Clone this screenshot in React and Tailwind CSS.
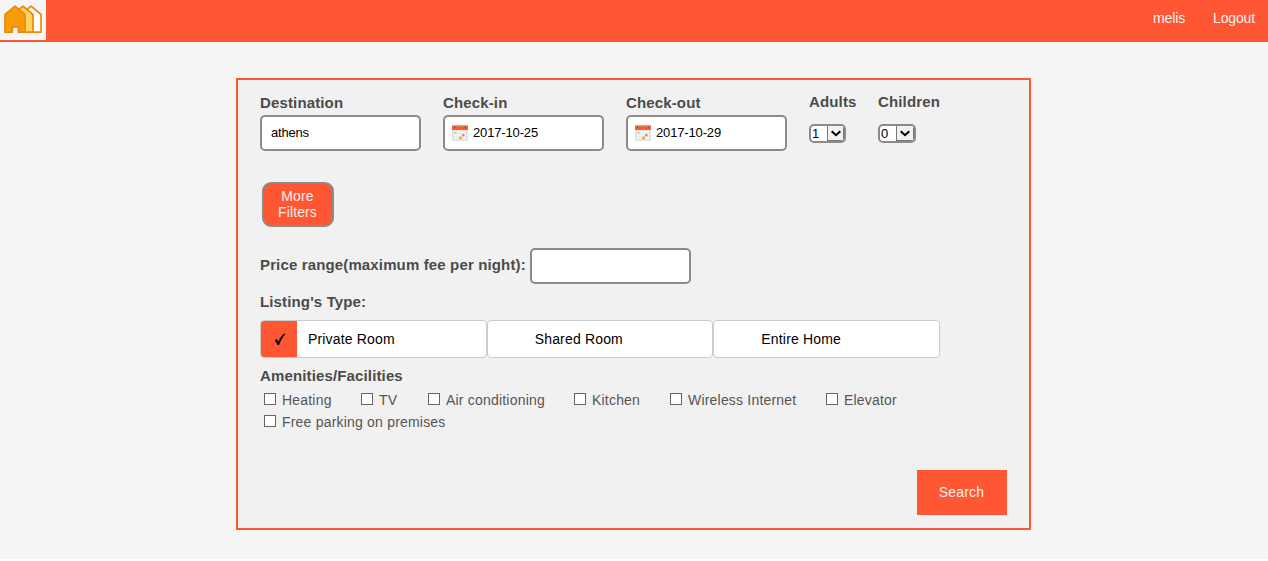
import React from "react";

const labelClass = "whitespace-nowrap text-[15px] font-bold tracking-[0.14px] text-[#4b4b4b]";

function Logo() {
  return (
    <svg width="46" height="40" viewBox="0 0 46 40" className="block bg-[#f5f5f5]">
      <g stroke="#ea890c" strokeWidth="1.7" strokeLinejoin="round">
        <path d="M21 32.2V14.5L31 6.2 41 14.5V32.2Z" fill="#fff" />
        <path d="M13 32.2V14.5L23 6.2 33 14.5V32.2Z" fill="#ffd35c" />
        <path d="M5 32.2V14.5L15 6.2 25 14.5V32.2Z" fill="#f79d08" />
        <path d="M12.3 33V26.8H18.3V33" fill="#f5f5f5" />
      </g>
      <path d="M13.2 31h4.2v3h-4.2Z" fill="#f5f5f5" />
    </svg>
  );
}

function CalendarIcon() {
  return (
    <svg width="16" height="16" viewBox="0 0 16 16" className="block shrink-0">
      <rect x="0" y="1" width="16" height="15" rx="0.8" fill="#dfe3ea" />
      <rect x="2" y="6" width="12" height="8" fill="#f6f7fa" />
      <path d="M5 6v8M8 6v8M11 6v8M2 8.6h12M2 11.3h12" stroke="#dfe3ea" strokeWidth="0.7" />
      <path d="M0 0.5h16V5H0Z" fill="#ff5a2c" />
      <path d="M0 0.5h16V1.5H0Z" fill="#d88a78" />
      <rect x="2" y="1.5" width="1.3" height="1.5" fill="#b5432a" />
      <rect x="12.7" y="1.5" width="1.3" height="1.5" fill="#b5432a" />
      <rect x="2.2" y="6.6" width="2.4" height="2.3" fill="#f8d25c" />
      <rect x="10.2" y="9" width="2.3" height="2.3" fill="#f2785a" />
      <rect x="7.2" y="11.8" width="2.6" height="2.3" fill="#f99b18" />
    </svg>
  );
}

function Field({ label, value, icon }) {
  return (
    <div className="mr-[22px] flex w-[161px] flex-col">
      <label className={labelClass + " h-[21px] leading-[17px]"}>{label}</label>
      <div className="flex h-9 items-center rounded-[5px] border-2 border-[#8b8b8b] bg-white text-[13px] text-black">
        {icon ? (
          <div className="flex items-center gap-[5px] pl-[7px]">
            <CalendarIcon />
            <span className="whitespace-nowrap leading-4 tracking-[-0.15px]">{value}</span>
          </div>
        ) : (
          <span className="pl-[9px] leading-4 tracking-[-0.2px]">{value}</span>
        )}
      </div>
    </div>
  );
}

function CountSelect({ label, value, boxWidth }) {
  return (
    <div className="w-[69px]">
      <div className={labelClass + " h-[30px] leading-[15px]"}>{label}</div>
      <div className={"flex h-[19px] overflow-hidden rounded-[5px] border-2 border-[#8b8b8b] bg-white " + boxWidth}>
        <span className="w-4 pl-[1px] text-[13px] leading-[15px] text-black">{value}</span>
        <span className="flex flex-1 items-center justify-center border-r border-b border-l border-[#777] bg-[#f1f1f1]">
          <svg width="12" height="7" viewBox="0 0 12 7" className="shrink-0">
            <path d="M1.7 1.2L6 5.2 10.3 1.2" fill="none" stroke="#000" strokeWidth="2" />
          </svg>
        </span>
      </div>
    </div>
  );
}

function RoomType({ label, selected }) {
  return (
    <div className="flex h-[38px] flex-1 overflow-hidden rounded-[4px] border border-[#ccc] bg-white">
      <div className={"flex w-9 shrink-0 items-center justify-center text-black " + (selected ? "bg-[#ff5733]" : "")}>
        {selected && (
          <svg width="12" height="13" viewBox="0 0 12 13" className="ml-[1px]">
            <path d="M0.8 7.3L2.8 6.1 4.3 8.8C5.6 5.7 7.6 2.5 10.2 0.6L11.3 1.1C8.8 3.9 6.8 7.7 5.2 11.8L3.5 12C2.7 10.2 1.9 8.6 0.8 7.3Z" />
          </svg>
        )}
      </div>
      <span className="pl-[11px] text-sm leading-9 tracking-[0.17px] text-black">{label}</span>
    </div>
  );
}

function Amenity({ label, width }) {
  return (
    <label className={"flex h-[22px] items-center gap-[6px] whitespace-nowrap text-sm text-[#555] " + width}>
      <span className="-mt-[2px] h-3 w-3 border border-[#666] bg-white" />
      <span className="tracking-[0.2px]">{label}</span>
    </label>
  );
}

export default function App() {
  return (
    <div className="h-[561px] overflow-hidden bg-white font-['Liberation_Sans',Arial,sans-serif]">
      <div className="h-[559px] bg-[#f5f5f5]">
        <header className="flex h-[42px] justify-between bg-[#ff5733]">
          <Logo />
          <nav className="flex gap-[28px] pr-[13px] text-sm leading-9 text-[#f2f2f2]">
            <span className="tracking-[-0.1px]">melis</span>
            <span className="tracking-[-0.15px]">Logout</span>
          </nav>
        </header>
        <main className="mt-9 ml-[236px] h-[452px] w-[795px] border-2 border-[#ff5733] bg-[#f1f1f1] pt-[14px] pr-[22px] pl-[22px]">
          <div className="flex h-[57px]">
            <Field label="Destination" value="athens" />
            <Field label="Check-in" value="2017-10-25" icon />
            <Field label="Check-out" value="2017-10-29" icon />
            <CountSelect label="Adults" value="1" boxWidth="w-[37px]" />
            <CountSelect label="Children" value="0" boxWidth="w-[38px]" />
          </div>
          <button className="mt-[31px] ml-[2px] block h-[45px] w-[72px] rounded-[9px] border-2 border-[#8b8b8b] bg-[#ff5733] pr-[1px] pb-[2px] text-sm leading-4 tracking-[0.1px] text-[#f8f0ee]">
            More
            <br />
            Filters
          </button>
          <div className="mt-[21px] flex h-9">
            <span className={labelClass + " w-[270px] leading-[33px]"}>Price range(maximum fee per night):</span>
            <div className="h-9 w-[161px] rounded-[5px] border-2 border-[#8b8b8b] bg-white" />
          </div>
          <h2 className={labelClass + " h-9 leading-9"}>Listing's Type:</h2>
          <div className="flex w-[680px]">
            <RoomType label="Private Room" selected />
            <RoomType label="Shared Room" />
            <RoomType label="Entire Home" />
          </div>
          <h2 className={labelClass + " h-[31px] leading-9"}>Amenities/Facilities</h2>
          <div className="flex flex-wrap pl-1">
            <Amenity label="Heating" width="w-[97px]" />
            <Amenity label="TV" width="w-[67px]" />
            <Amenity label="Air conditioning" width="w-[146px]" />
            <Amenity label="Kitchen" width="w-[96px]" />
            <Amenity label="Wireless Internet" width="w-[156px]" />
            <Amenity label="Elevator" width="w-[90px]" />
            <Amenity label="Free parking on premises" width="w-[200px]" />
          </div>
          <button className="mt-[37px] ml-auto block h-[45px] w-[90px] bg-[#ff5733] pr-[1px] pb-[2px] text-sm tracking-[0.2px] text-[#f8f0ee]">Search</button>
        </main>
      </div>
    </div>
  );
}
